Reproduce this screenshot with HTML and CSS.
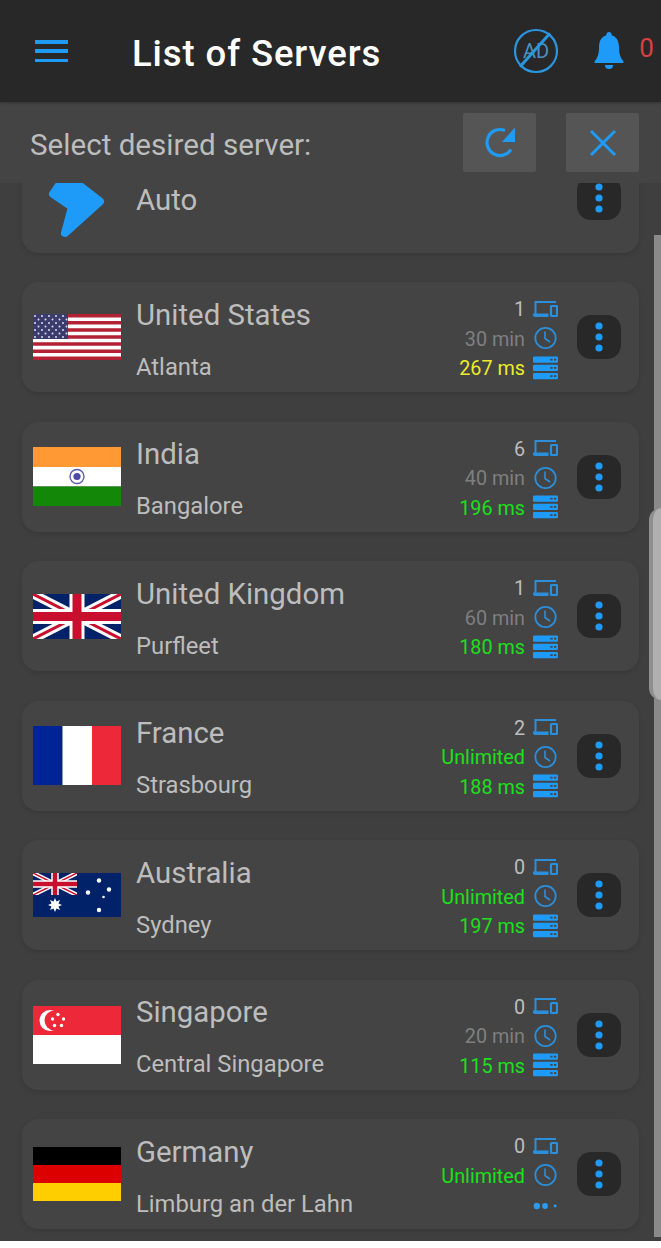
FILE: index.html
```html
<!DOCTYPE html>
<html lang="en">
<head>
<meta charset="utf-8">
<title>List of Servers</title>
<link rel="stylesheet" href="styles.css">
</head>
<body>
<svg class="defs" width="0" height="0" aria-hidden="true">
  <symbol id="devices" viewBox="0 0 25 16">
    <path d="M2.500 13V1H23" fill="none" stroke="currentColor" stroke-width="2"/>
    <path d="M0 12.500h15.500V16H2q-2 0-2-2z" fill="currentColor"/>
    <rect x="18" y="5" width="6" height="10" rx="0.6" fill="none" stroke="currentColor" stroke-width="2.200"/>
  </symbol>
  <symbol id="clock" viewBox="0 0 24 24">
    <circle cx="12" cy="12" r="10.200" fill="none" stroke="currentColor" stroke-width="1.800"/>
    <path d="M11.500 5.500v7l5 3.500" fill="none" stroke="currentColor" stroke-width="1.600"/>
  </symbol>
  <symbol id="server" viewBox="0 0 26 24">
    <rect y="0" width="26" height="6.600" rx="1.200" fill="currentColor"/>
    <rect y="8.600" width="26" height="6.600" rx="1.200" fill="currentColor"/>
    <rect y="17.200" width="26" height="6.600" rx="1.200" fill="currentColor"/>
    <path d="M18 2.400h2.400v1.800H18zM21.800 2.400h2.400v1.800h-2.400zM18 11h2.400v1.800H18zM21.800 11h2.400v1.800h-2.400zM18 19.600h2.400v1.800H18zM21.800 19.600h2.400v1.800h-2.400z" fill="#444"/>
  </symbol>
  <symbol id="dots" viewBox="0 0 8 30">
    <circle cx="4" cy="4" r="3.600" fill="currentColor"/>
    <circle cx="4" cy="15" r="3.600" fill="currentColor"/>
    <circle cx="4" cy="26" r="3.600" fill="currentColor"/>
  </symbol>
  <symbol id="union" viewBox="0 0 88 45" preserveAspectRatio="none">
    <rect width="88" height="45" fill="#012169"/>
    <path d="M0 0L88 45M88 0L0 45" stroke="#fff" stroke-width="9"/>
    <path d="M0 0L44 22.500M88 45L44 22.500M88 0L44 22.500M0 45L44 22.500" stroke="#c8102e" stroke-width="3"/>
    <path d="M44 0v45M0 22.500h88" stroke="#fff" stroke-width="15"/>
    <path d="M44 0v45M0 22.500h88" stroke="#c8102e" stroke-width="9"/>
  </symbol>
</svg>

<div class="app">
  <header class="topbar">
    <div class="burger"><span></span><span></span><span></span></div>
    <h1 class="title">List of Servers</h1>
    <svg class="ad-icon" viewBox="0 0 46 46">
      <circle cx="23" cy="23" r="21" fill="none" stroke="#2b96e0" stroke-width="2.200"/>
      <text x="23" y="30" class="ad-text" text-anchor="middle">AD</text>
      <path d="M7 38.700L37 5.300" stroke="#2b96e0" stroke-width="3"/>
    </svg>
    <svg class="bell" viewBox="0 0 30 38">
      <path d="M15 0q2.500 0 2.700 3.200C23.500 5 25 10 25 16c0 6 1.500 10 4.500 13.500q.5 1.500-1 1.500H1.500q-1.500 0-1-1.500C3.500 26 5 22 5 16c0-6 1.500-11 7.300-12.800Q12.500 0 15 0z" fill="#1e9bf8"/>
      <path d="M11 33h8q0 4-4 4t-4-4z" fill="#1e9bf8"/>
    </svg>
    <span class="count">0</span>
  </header>

  <div class="subbar">
    <span class="prompt">Select desired server:</span>
    <div class="actions">
      <button class="act">
        <svg class="act-icon" viewBox="0 0 32 32">
          <path d="M27 22.500A13 13 0 1 1 21 3.500" fill="none" stroke="#1f9af5" stroke-width="3.200"/>
          <path d="M31 .5V15H18z" fill="#1f9af5"/>
        </svg>
      </button>
      <button class="act">
        <svg class="act-icon" viewBox="0 0 32 32">
          <path d="M4 4L28 28M28 4L4 28" fill="none" stroke="#1f9af5" stroke-width="3"/>
        </svg>
      </button>
    </div>
  </div>

  <main class="list">
    <div class="cards">
      <article class="card">
        <div class="flag">
          <svg class="auto-icon" viewBox="0 0 88 88">
            <path d="M33 21L20 40L39 53L32 79L67 47.500Z" fill="#1e9bf8" stroke="#1e9bf8" stroke-width="8" stroke-linejoin="round"/>
          </svg>
        </div>
        <div class="auto-name">Auto</div>
        <div class="more"><svg class="more-icon"><use href="#dots"/></svg></div>
      </article>

      <article class="card">
        <div class="flag">
          <svg class="f-us" viewBox="0 0 88 46">
            <defs>
              <pattern id="stars" width="7" height="7" patternUnits="userSpaceOnUse">
                <circle cx="2" cy="2" r="1" fill="#dcdce8"/>
                <circle cx="5.500" cy="5.500" r="1" fill="#dcdce8"/>
              </pattern>
            </defs>
            <rect width="88" height="46" fill="#fff"/>
            <path d="M0 1.770h88M0 8.850h88M0 15.920h88M0 23h88M0 30.080h88M0 37.150h88M0 44.230h88" stroke="#b22234" stroke-width="3.540"/>
            <rect width="35" height="25" fill="#3c3b6e"/>
            <rect width="35" height="25" fill="url(#stars)"/>
          </svg>
        </div>
        <div class="info"><div class="name">United States</div><div class="city">Atlanta</div></div>
        <div class="stats">
          <div class="stat"><span class="val">1</span><svg class="ico"><use href="#devices"/></svg></div>
          <div class="stat"><span class="val dim">30 min</span><svg class="ico"><use href="#clock"/></svg></div>
          <div class="stat"><span class="val yellow">267 ms</span><svg class="ico bright"><use href="#server"/></svg></div>
        </div>
        <div class="more"><svg class="more-icon"><use href="#dots"/></svg></div>
      </article>

      <article class="card">
        <div class="flag">
          <svg class="f-in" viewBox="0 0 88 59">
            <rect width="88" height="20" fill="#ff9933"/>
            <rect y="20" width="88" height="19.500" fill="#fff"/>
            <rect y="39.500" width="88" height="19.500" fill="#138808"/>
            <circle cx="44" cy="29.500" r="7" fill="none" stroke="#5a5ab0" stroke-width="1.400"/>
            <circle cx="44" cy="29.500" r="3.600" fill="#4a4aa8"/>
          </svg>
        </div>
        <div class="info"><div class="name">India</div><div class="city">Bangalore</div></div>
        <div class="stats">
          <div class="stat"><span class="val">6</span><svg class="ico"><use href="#devices"/></svg></div>
          <div class="stat"><span class="val dim">40 min</span><svg class="ico"><use href="#clock"/></svg></div>
          <div class="stat"><span class="val green">196 ms</span><svg class="ico bright"><use href="#server"/></svg></div>
        </div>
        <div class="more"><svg class="more-icon"><use href="#dots"/></svg></div>
      </article>

      <article class="card">
        <div class="flag"><svg class="f-uk"><use href="#union"/></svg></div>
        <div class="info"><div class="name">United Kingdom</div><div class="city">Purfleet</div></div>
        <div class="stats">
          <div class="stat"><span class="val">1</span><svg class="ico"><use href="#devices"/></svg></div>
          <div class="stat"><span class="val dim">60 min</span><svg class="ico"><use href="#clock"/></svg></div>
          <div class="stat"><span class="val green">180 ms</span><svg class="ico bright"><use href="#server"/></svg></div>
        </div>
        <div class="more"><svg class="more-icon"><use href="#dots"/></svg></div>
      </article>

      <article class="card">
        <div class="flag">
          <svg class="f-fr" viewBox="0 0 88 59">
            <rect width="29.500" height="59" fill="#002395"/>
            <rect x="29.500" width="29.500" height="59" fill="#fff"/>
            <rect x="59" width="29" height="59" fill="#ed2939"/>
          </svg>
        </div>
        <div class="info"><div class="name">France</div><div class="city">Strasbourg</div></div>
        <div class="stats">
          <div class="stat"><span class="val">2</span><svg class="ico"><use href="#devices"/></svg></div>
          <div class="stat"><span class="val green">Unlimited</span><svg class="ico"><use href="#clock"/></svg></div>
          <div class="stat"><span class="val green">188 ms</span><svg class="ico bright"><use href="#server"/></svg></div>
        </div>
        <div class="more"><svg class="more-icon"><use href="#dots"/></svg></div>
      </article>

      <article class="card">
        <div class="flag">
          <svg class="f-au" viewBox="0 0 88 44">
            <rect width="88" height="44" fill="#012169"/>
            <use href="#union" width="44" height="22"/>
            <path d="M22 25l1.500 3.500 3.500-1.500-1.500 3.500 3.500 1.500-3.500 1.500 1.500 3.500-3.500-1.500-1.500 3.500-1.500-3.500-3.500 1.500 1.500-3.500-3.500-1.500 3.500-1.500-1.500-3.500 3.500 1.500z" fill="#fff"/>
            <circle cx="66" cy="7.500" r="2.200" fill="#fff"/>
            <circle cx="55" cy="19.500" r="2.200" fill="#fff"/>
            <circle cx="76" cy="16.500" r="2.200" fill="#fff"/>
            <circle cx="70.500" cy="24" r="1.300" fill="#fff"/>
            <circle cx="66" cy="37" r="2.200" fill="#fff"/>
          </svg>
        </div>
        <div class="info"><div class="name">Australia</div><div class="city">Sydney</div></div>
        <div class="stats">
          <div class="stat"><span class="val">0</span><svg class="ico"><use href="#devices"/></svg></div>
          <div class="stat"><span class="val green">Unlimited</span><svg class="ico"><use href="#clock"/></svg></div>
          <div class="stat"><span class="val green">197 ms</span><svg class="ico bright"><use href="#server"/></svg></div>
        </div>
        <div class="more"><svg class="more-icon"><use href="#dots"/></svg></div>
      </article>

      <article class="card">
        <div class="flag">
          <svg class="f-sg" viewBox="0 0 88 58">
            <rect width="88" height="29" fill="#ed2939"/>
            <rect y="29" width="88" height="29" fill="#fff"/>
            <circle cx="17" cy="14.500" r="10.500" fill="#fff"/>
            <circle cx="21.500" cy="14.500" r="10" fill="#ed2939"/>
            <circle cx="25" cy="8.500" r="1.700" fill="#fff"/>
            <circle cx="30.500" cy="13" r="1.700" fill="#fff"/>
            <circle cx="28.500" cy="19.500" r="1.700" fill="#fff"/>
            <circle cx="21.500" cy="19.500" r="1.700" fill="#fff"/>
            <circle cx="19.500" cy="13" r="1.700" fill="#fff"/>
          </svg>
        </div>
        <div class="info"><div class="name">Singapore</div><div class="city">Central Singapore</div></div>
        <div class="stats">
          <div class="stat"><span class="val">0</span><svg class="ico"><use href="#devices"/></svg></div>
          <div class="stat"><span class="val dim">20 min</span><svg class="ico"><use href="#clock"/></svg></div>
          <div class="stat"><span class="val green">115 ms</span><svg class="ico bright"><use href="#server"/></svg></div>
        </div>
        <div class="more"><svg class="more-icon"><use href="#dots"/></svg></div>
      </article>

      <article class="card">
        <div class="flag">
          <svg class="f-de" viewBox="0 0 88 54">
            <rect width="88" height="18" fill="#000"/>
            <rect y="18" width="88" height="18" fill="#dd0000"/>
            <rect y="36" width="88" height="18" fill="#ffce00"/>
          </svg>
        </div>
        <div class="info"><div class="name">Germany</div><div class="city">Limburg an der Lahn</div></div>
        <div class="stats">
          <div class="stat"><span class="val">0</span><svg class="ico"><use href="#devices"/></svg></div>
          <div class="stat"><span class="val green">Unlimited</span><svg class="ico"><use href="#clock"/></svg></div>
          <div class="stat">
            <svg class="loading" viewBox="0 0 26 8">
              <circle cx="4" cy="4" r="3.300"/>
              <circle cx="12.500" cy="4" r="3"/>
              <circle cx="23" cy="4" r="1.500"/>
            </svg>
          </div>
        </div>
        <div class="more"><svg class="more-icon"><use href="#dots"/></svg></div>
      </article>
    </div>
  </main>

  <div class="scrollbar"></div>
  <div class="edge-handle"></div>
</div>
</body>
</html>
```

FILE: styles.css
```css
* {
  box-sizing: border-box;
}

html,
body {
  margin: 0;
  background: #fff;
}

body {
  font-family: Roboto, "Liberation Sans", sans-serif;
}

.defs {
  position: absolute;
}

.app {
  position: relative;
  height: 1241px;
  overflow: hidden;
  display: flex;
  flex-direction: column;
  background: #3f3f3f;
}

.topbar {
  flex: 0 0 102px;
  display: flex;
  align-items: center;
  background: #282828;
  padding: 0 0 0 35px;
  box-shadow: 0 1px 2px rgba(0, 0, 0, 0.25);
  position: relative;
  z-index: 2;
}

.burger {
  width: 33px;
  height: 22px;
  display: flex;
  flex-direction: column;
  justify-content: space-between;
  margin-right: 65px;
}

.burger span {
  height: 3.5px;
  background: #1f9af5;
}

.title {
  margin: 4px 132px 0 -1px;
  font-size: 36.5px;
  font-weight: 500;
  letter-spacing: 0.9px;
  color: #fff;
  white-space: nowrap;
}

.ad-icon {
  flex: none;
  width: 46px;
  height: 46px;
  margin-right: 35px;
}

.ad-text {
  font-family: Roboto, sans-serif;
  font-size: 20px;
  fill: #4a90c4;
}

.bell {
  flex: none;
  width: 30px;
  height: 38px;
  margin-right: 15px;
  margin-top: -1px;
}

.count {
  font-size: 26px;
  color: #d9403f;
  margin-top: -6px;
}

.subbar {
  flex: 0 0 81px;
  display: flex;
  align-items: flex-start;
  justify-content: space-between;
  background: #444;
  padding: 11px 22px 0 30px;
}

.prompt {
  font-size: 29.6px;
  line-height: 64px;
  color: #bdbdbd;
}

.actions {
  display: flex;
  gap: 30px;
}

.act {
  width: 73px;
  height: 59px;
  border: 0;
  border-radius: 2px;
  padding: 0;
  background: #555;
  display: flex;
  align-items: center;
  justify-content: center;
}

.act-icon {
  width: 32px;
  height: 32px;
}

.list {
  flex: 1;
  overflow: hidden;
  padding: 0 22px;
}

.cards {
  display: flex;
  flex-direction: column;
  gap: 29.5px;
  margin-top: -40.2px;
}

.card {
  flex: none;
  height: 110px;
  display: flex;
  align-items: center;
  background: #444;
  border-radius: 16px;
  padding: 0 18px 0 11px;
  box-shadow: 0 2px 5px rgba(0, 0, 0, 0.12);
}

.flag {
  flex: 0 0 88px;
  display: flex;
  align-items: center;
  margin-right: 15px;
}

.flag > svg {
  display: block;
  width: 88px;
}

.flag .auto-icon { height: 88px; }
.flag .f-us { height: 46px; }
.flag .f-in { height: 59px; }
.flag .f-uk { height: 45px; }
.flag .f-fr { height: 59px; }
.flag .f-au { height: 44px; }
.flag .f-sg { height: 58px; }
.flag .f-de { height: 54px; }

.auto-name {
  flex: 1;
  font-size: 29.4px;
  color: #bdbdbd;
  margin-top: 4px;
}

.info {
  flex: 1;
  min-width: 0;
  height: 110px;
  display: flex;
  flex-direction: column;
  color: #bdbdbd;
}

.name {
  font-size: 29.4px;
  line-height: 34px;
  margin-top: 15.5px;
}

.city {
  font-size: 23.8px;
  line-height: 28px;
  margin-top: 21px;
}

.stats {
  flex: none;
  display: flex;
  flex-direction: column;
  align-items: flex-end;
  margin-right: 19px;
  margin-top: 4px;
}

.stat {
  height: 29.5px;
  display: flex;
  align-items: center;
  justify-content: flex-end;
}

.val {
  font-size: 19.8px;
  color: #bdbdbd;
  margin-right: 8px;
}

.val.dim { color: #7f7f7f; }
.val.green { color: #1be01b; }
.val.yellow { color: #ecec2c; }

.ico {
  width: 25px;
  height: 24px;
  margin-top: -2px;
  color: #2b8fdc;
}

.ico.bright {
  color: #1e9bf8;
}

.loading {
  width: 25px;
  height: 8px;
  fill: #2b9bf0;
}

.more {
  flex: none;
  width: 44px;
  height: 44px;
  border-radius: 14px;
  background: #282828;
  display: flex;
  align-items: center;
  justify-content: center;
  color: #1e9bf8;
}

.more-icon {
  width: 8px;
  height: 30px;
}

.scrollbar {
  position: absolute;
  right: 0;
  top: 235px;
  bottom: 4px;
  width: 7px;
  background: #8a8a8a;
}

.edge-handle {
  position: absolute;
  right: 0;
  top: 508px;
  width: 12px;
  height: 192px;
  border-radius: 12px 0 0 12px;
  background: #b0b0b0;
  border-left: 4px solid #8f8f8f;
}
```
